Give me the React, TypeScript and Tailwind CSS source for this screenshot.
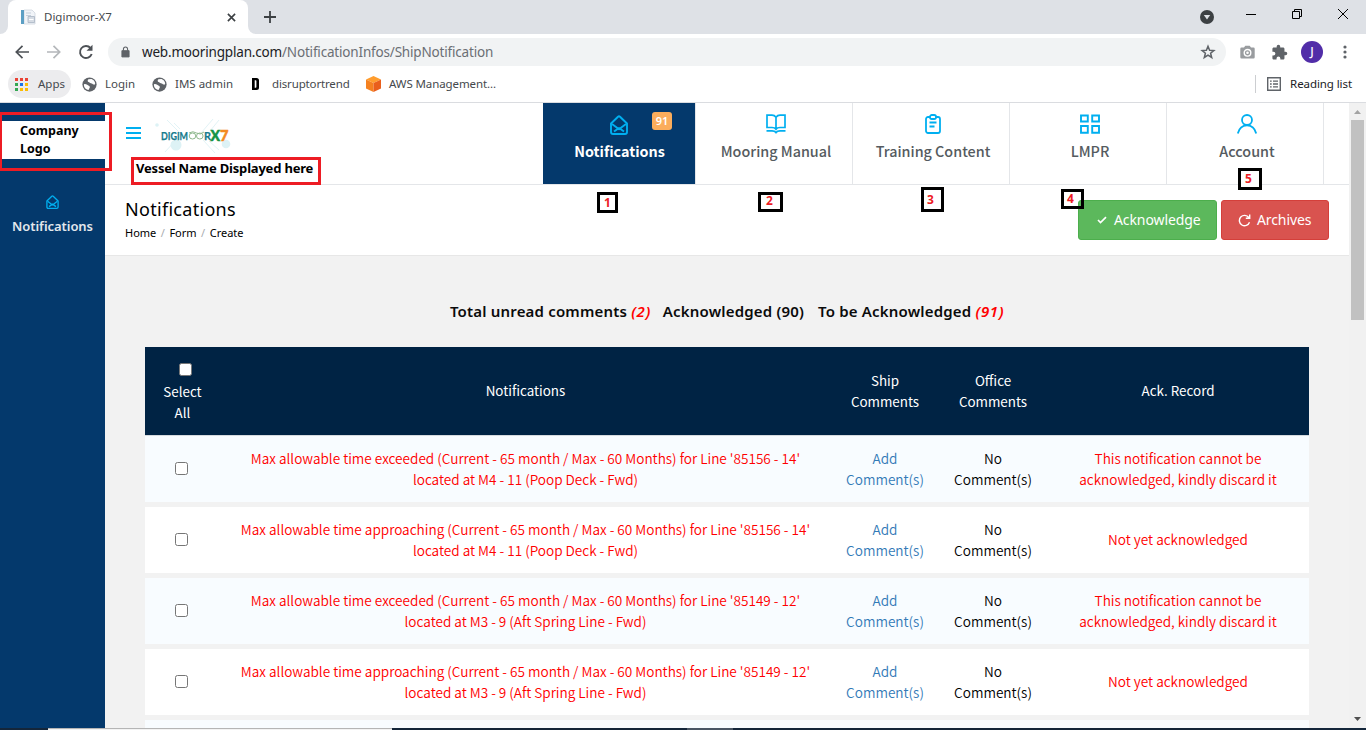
import React from 'react';

const UI = "font-['Noto_Sans','Open_Sans',sans-serif]";
const SOURCE = "font-['Noto_Sans_CJK_SC','Noto_Sans',sans-serif]";

function Globe() {
  return (
    <svg viewBox="0 0 16 16" className="size-[15px] shrink-0">
      <circle cx="8" cy="8" r="7.6" fill="#5f6368" />
      <path d="M2 8.600c0-1 .9-1.200 2-.9 1.600.4 2.500 1.300 3.400 1.700.9.500 1.300 1.300.7 2.200-.6.800-.6 1.800-1.500 2.300C3.800 13.300 2.100 11.400 2 8.600ZM6.800 2.400l3.400-.3c2 .8 3.400 2.300 3.800 4.300.2 1.300-.5 2-1.600 1.700-1.200-.3-1.500-1.400-2.900-1.400-1.300 0-1.300-1.100-2.400-1.300-1.100-.3-1.500-1.800-.3-3Z" fill="#fff" />
    </svg>
  );
}

const appDots = ['#ea4335', '#ea4335', '#ea4335', '#34a853', '#1a73e8', '#fbbc04', '#34a853', '#fbbc04', '#fbbc04'];

function TabStrip() {
  return (
    <div className="flex h-[34px] bg-[#dee1e6]">
      <div className="flex w-2 items-end bg-white">
        <div className="h-full w-2 rounded-br-lg bg-[#dee1e6]" />
      </div>
      <div className="flex h-full w-60 items-center rounded-t-lg bg-white pl-3">
        <svg viewBox="0 0 16 16" className="size-4">
          <path d="M4 1h8l3 3v11H4z" fill="#f1f4f8" stroke="#cfd6de" strokeWidth=".8" />
          <path d="M1 1h3v14H1z" fill="#5c9fc4" />
          <path d="M6 4h5M6 6.500h5" stroke="#c5ceda" />
          <path d="M8 7.500h6.500v6H8z" fill="#d5dbe3" stroke="#a9b5c3" strokeWidth=".8" /><path d="M9 10.500h4.500" stroke="#fff" />
        </svg>
        <span className="ml-2 w-[183px] text-[11.5px] text-[#45494d]">Digimoor-X7</span>
        <svg viewBox="0 0 10 10" className="size-[9px] shrink-0"><path d="m1 1 8 8M9 1 1 9" stroke="#3c4043" strokeWidth="1.800" /></svg>
      </div>
      <div className="flex w-2 bg-white"><div className="h-full w-2 rounded-bl-lg bg-[#dee1e6]" /></div>
      <svg viewBox="0 0 14 14" className="ml-[7px] mt-[10px] size-[14px]"><path d="M7 1v12M1 7h12" stroke="#3c4043" strokeWidth="1.800" /></svg>
      <div className="ml-auto flex items-start">
        <svg viewBox="0 0 14 14" className="mt-[10px] mr-8 size-[14px]"><circle cx="7" cy="7" r="7" fill="#3c4043" /><path d="M3.800 5h6.400L7 9.600Z" fill="#dee1e6" /></svg>
        <svg viewBox="0 0 10 10" className="mt-[9px] mr-9 size-[10px]"><path d="M0 5.500h10" stroke="#000" /></svg>
        <svg viewBox="0 0 10 10" className="mt-[9px] mr-9 size-[10px]"><path d="M.5 2.500h7v7h-7zM2.500 2.500v-2h7v7h-2" fill="none" stroke="#000" /></svg>
        <svg viewBox="0 0 10 10" className="mt-[9px] mr-[18px] size-[10px]"><path d="m0 0 10 10M10 0 0 10" stroke="#000" /></svg>
      </div>
    </div>
  );
}

function Toolbar() {
  return (
    <div className="flex h-9 items-center bg-white pl-[15px] text-[#5f6368]">
      <svg viewBox="0 0 14 14" className="size-[14px]"><path d="M14 7H1.500M7.500.8 1.300 7l6.200 6.200" fill="none" stroke="#4d5156" strokeWidth="1.700" /></svg>
      <svg viewBox="0 0 14 14" className="ml-[18px] size-[14px]"><path d="M0 7h12.500M6.500.8 12.700 7l-6.200 6.200" fill="none" stroke="#b4b7ba" strokeWidth="1.700" /></svg>
      <svg viewBox="0 0 16 16" className="ml-[17px] size-4"><path d="M13.700 10A6 6 0 1 1 12.500 4" fill="none" stroke="#4d5156" strokeWidth="1.900" /><path d="M14.500.8v6H8.500Z" fill="#4d5156" /></svg>
      <div className="ml-[14px] flex h-7 w-[1118px] items-center rounded-full bg-[#f1f3f4] pr-[10px] pl-[13px]">
        <svg viewBox="0 0 10 13" className="h-3 w-[9px]"><path d="M1 5h8v7H1z" fill="#5f6368" stroke="#5f6368" strokeLinejoin="round" /><path d="M2.700 5V3.200a2.300 2.300 0 0 1 4.600 0V5" fill="none" stroke="#5f6368" strokeWidth="1.200" /></svg>
        <span className="ml-3 text-[13.5px] tracking-[-0.18px] text-[#6b6f74]"><span className="text-[#202124]">web.mooringplan.com</span>/NotificationInfos/ShipNotification</span>
        <svg viewBox="0 0 16 16" className="ml-auto size-4"><path d="m8 2.200 1.600 4 4.300.3-3.300 2.800 1.100 4.200L8 11.200l-3.700 2.300 1.100-4.200-3.300-2.800 4.300-.3Z" fill="none" stroke="#5f6368" strokeWidth="1.500" /></svg>
      </div>
      <svg viewBox="0 0 15 14" className="ml-[14px] h-[14px] w-[15px]"><path d="M1.500 2.500H4L5.300.8h4.400L11 2.500h2.500q1.200 0 1.200 1.200v8.500q0 1.200-1.200 1.200h-12Q.3 13.400.3 12.200V3.700q0-1.200 1.200-1.200Z" fill="#999c9f" /><circle cx="7.500" cy="7.800" r="3.300" fill="#999c9f" stroke="#fff" strokeWidth="1.400" /><circle cx="7.500" cy="7.800" r="1.300" fill="#fff" /></svg>
      <svg viewBox="0 0 24 24" className="ml-4 size-[17px]" fill="#5f6368"><path d="M20.500 11H19V7c0-1.100-.9-2-2-2h-4V3.500a2.500 2.500 0 0 0-5 0V5H4c-1.100 0-2 .9-2 2v3.800h1.500a2.700 2.700 0 0 1 0 5.400H2V20c0 1.100.9 2 2 2h3.800v-1.500a2.700 2.700 0 0 1 5.400 0V22H17c1.100 0 2-.9 2-2v-4h1.500a2.500 2.500 0 0 0 0-5Z" /></svg>
      <div className="ml-[13px] flex size-[22px] items-center justify-center rounded-full bg-[#512da8] text-xs font-medium text-white">J</div>
      <svg viewBox="0 0 4 14" className="ml-5 h-[14px] w-1" fill="#5f6368"><circle cx="2" cy="2" r="1.600" /><circle cx="2" cy="7" r="1.600" /><circle cx="2" cy="12" r="1.600" /></svg>
    </div>
  );
}

function Bookmarks() {
  return (
    <div className="flex h-[33px] items-center border-b border-[#dadce0] bg-white pb-1 text-[11.5px] text-[#45494d]">
      <div className="ml-2 flex h-7 w-[63px] shrink-0 items-center rounded-full bg-[#ececee] pl-[7px]">
        <div className="grid grid-cols-3 gap-[2px]">
          {appDots.map((c, i) => <span key={i} className="size-[3px]" style={{ backgroundColor: c }} />)}
        </div>
        <span className="ml-[10px]">Apps</span>
      </div>
      <div className="ml-[11px] flex w-[70px] items-center gap-2"><Globe />Login</div>
      <div className="flex w-[100px] items-center gap-2"><Globe />IMS admin</div>
      <div className="flex w-[114px] items-center">
        <svg viewBox="0 0 7 12" className="h-3 w-[7px]"><path d="M0 0h4.500Q7 0 7 2.500v7Q7 12 4.500 12H0ZM2.700 2.300v7.400h1.100q.6 0 .6-.6V2.900q0-.6-.6-.6Z" fill="#000" fillRule="evenodd" /></svg>
        <span className="ml-[13px] tracking-[-0.15px]">disruptortrend</span>
      </div>
      <svg viewBox="0 0 15 16" className="h-4 w-[15px]"><path d="M7.500 0 15 3.500 7.500 7 0 3.500Z" fill="#ff9d2e" /><path d="M0 3.500 7.500 7v9L0 12.500Z" fill="#f58120" /><path d="M15 3.500 7.500 7v9l7.500-3.500Z" fill="#e95f1c" /></svg>
      <span className="ml-2 tracking-[-0.1px]">AWS Management...</span>
      <div className="ml-auto mr-[14px] flex items-center border-l border-[#ccced1] pl-[11px]">
        <svg viewBox="0 0 14 14" className="size-[14px]"><path d="M.7.7h12.600v12.600H.7z" fill="none" stroke="#5f6368" strokeWidth="1.400" /><path d="M3 4.200h1.700M3 7h1.700M3 9.800h1.700M6 4.200h5M6 7h5M6 9.800h5" stroke="#5f6368" strokeWidth="1.300" /></svg>
        <span className="ml-[9px] tracking-[-0.08px] text-[#202124]">Reading list</span>
      </div>
    </div>
  );
}

function BrandLogo() {
  return (
    <svg viewBox="0 0 80 36" className="ml-3 h-9 w-20">
      <g stroke="#e2f3f6" fill="none"><path d="m14 3 14 14M21 6l6 6M60 2 48 16M66 3l-9 11M22 24 12 35M56 24l10 9M50 23l12 13" /></g>
      <g fill="#ddf2f5"><circle cx="4" cy="8" r="1.800" /><circle cx="23" cy="28" r="5.500" /><circle cx="73" cy="27" r="4.300" /></g>
      <g fontFamily="Lato, sans-serif" fontSize="11" fontWeight="700">
        <text x="8" y="22.500" fill="#167b8d" stroke="#167b8d" strokeWidth=".25" textLength="27" lengthAdjust="spacingAndGlyphs">DIGIM</text>
        <text x="51" y="22.500" fill="#167b8d" stroke="#167b8d" strokeWidth=".25" textLength="7" lengthAdjust="spacingAndGlyphs">R</text>
        <text x="57.500" y="23.500" fill="#159447" stroke="#159447" strokeWidth=".5" fontSize="15" fontWeight="900" textLength="9.500" lengthAdjust="spacingAndGlyphs">X</text>
        <text x="67" y="23.500" fill="#f38a22" stroke="#f38a22" strokeWidth=".5" fontSize="15" fontWeight="900" textLength="8.500" lengthAdjust="spacingAndGlyphs">7</text>
      </g>
      <g fill="none" stroke="#8fb98e" strokeWidth="1"><ellipse cx="39.500" cy="19" rx="3.300" ry="3" /><ellipse cx="46.800" cy="19" rx="3.300" ry="3" /><path d="M36 16q4-2.500 7.500 0t7.500-1" /></g>
    </svg>
  );
}

const ClipIcon = () => (
  <svg viewBox="0 0 16 20" className="h-5 w-4" fill="none" stroke="#00aff0" strokeWidth="1.800"><rect x="1" y="3" width="14" height="16" rx="2" /><rect x="5" y="1" width="6" height="4" rx="1.800" fill="#fff" /><path d="M4.500 8.500h7M4.500 12.500h5" /></svg>
);
const GridIcon = () => (
  <svg viewBox="0 0 20 20" className="size-5" fill="none" stroke="#00aff0" strokeWidth="1.900"><path d="M1 1.500h6.800v6H1zM12.200 1.500H19v6h-6.800zM1 12h6.800v6.800H1zM12.200 12H19v6.800h-6.800z" /></svg>
);
const UserIcon = () => (
  <svg viewBox="0 0 20 20" className="size-5" fill="none" stroke="#00aff0" strokeWidth="1.800"><circle cx="10" cy="6" r="5" /><path d="M.8 19.500C2 14.500 5.500 11.300 10 11.300s8 3.200 9.200 8.200" /></svg>
);
const EnvelopeIcon = ({ className }: { className: string }) => (
  <svg viewBox="0 0 18 20" className={className} fill="none" stroke="#00aff0" strokeWidth="1.900" strokeLinejoin="round"><path d="M1 8.500 8 1.700q1-.9 2 0l7 6.800V17q0 2-2 2H3q-2 0-2-2Z" /><path d="m2 9 7 5.300L16 9M4 16.600l5-3.600 5 3.600" /></svg>
);
const BookIcon = () => (
  <svg viewBox="0 0 20 20" className="size-5" fill="none" stroke="#00aff0" strokeWidth="1.700"><path d="M10 3.200Q8.500 1.200 6 1.200H1v12.300h5q2.800 0 4 1.800 1.200-1.800 4-1.800h5V1.200h-5q-2.500 0-4 2v12M.5 16.800H6q2.700 0 4 1.800 1.300-1.800 4-1.800h5.500" /></svg>
);

function Header() {
  const items = [
    { label: 'Mooring Manual', icon: <BookIcon /> },
    { label: 'Training Content', icon: <ClipIcon /> },
    { label: 'LMPR', icon: <GridIcon /> },
    { label: 'Account', icon: <UserIcon /> },
  ];
  return (
    <header className="flex h-[82px] border-b border-[#e4e6e9] bg-white">
      <div className="flex w-[438px] items-start pt-[14px] pl-[21px]">
        <svg viewBox="0 0 15 12" className="mt-[10px] h-3 w-[15px]"><path d="M0 1h15M0 6h15M0 11h15" stroke="#00aff0" strokeWidth="2" /></svg>
        <BrandLogo />
      </div>
      <nav className={`flex text-[14.35px] font-medium text-[#555b60] ${SOURCE}`}>
        <div className="relative flex w-[153px] flex-col items-center border-r border-[#e4e6e9] bg-[#04396c] pt-3 font-bold text-white">
          <EnvelopeIcon className="h-5 w-[18px]" />
          <span className="mt-[5px] ml-px leading-[21px]">Notifications</span>
          <span className={`absolute top-[9px] left-[109px] flex h-[18px] w-5 items-center justify-center rounded-[3px] bg-[#fbad5c] text-[11px] font-semibold ${UI}`}>91</span>
        </div>
        {items.map((it) => (
          <div key={it.label} className="flex w-[157px] flex-col items-center border-r border-[#e4e6e9] pt-[11px] pl-1">
            {it.icon}
            <span className="mt-[6px] leading-[21px]">{it.label}</span>
          </div>
        ))}
      </nav>
    </header>
  );
}

function TitleBar() {
  return (
    <div className="flex h-[71px] items-start border-b border-[#e7e7e7] bg-white pt-[15px] pl-5">
      <div className="text-black">
        <h1 className="-mt-[3px] text-[18px] leading-6 tracking-[0.3px]">Notifications</h1>
        <div className="mt-1 flex text-[11px] leading-4">
          <span>Home</span><span className="mx-[4.5px] text-[#a9acb0]">/</span><span>Form</span><span className="mx-[4.5px] text-[#a9acb0]">/</span><span>Create</span>
        </div>
      </div>
      <div className="mr-5 ml-auto flex gap-1 text-[14px] text-white">
        <button className="flex h-10 w-[139px] items-center rounded-[3px] border border-[#4cae4c] bg-[#5cb85c] pb-[2px] pl-[18px] tracking-[-0.1px]">
          <svg viewBox="0 0 10 8" className="mt-[2px] mr-[7px] h-2 w-[10px]"><path d="m1 4 2.500 2.500L9 1.200" fill="none" stroke="#fff" strokeWidth="1.700" /></svg>
          Acknowledge
        </button>
        <button className="flex h-10 w-[108px] items-center rounded-[3px] border border-[#d43f3a] bg-[#d9534f] pb-[2px] pl-[16px] tracking-[-0.1px]">
          <svg viewBox="0 0 13 13" className="mt-[2px] mr-[6px] size-[13px]"><path d="M11.500 8.300A5.200 5.200 0 1 1 10.800 3.500M7.800 4.300h3.900V.5" fill="none" stroke="#fff" strokeWidth="1.400" /></svg>
          Archives
        </button>
      </div>
    </div>
  );
}

const COLS = 'grid grid-cols-[75px_611px_108px_108px_262px] items-center text-center';
const rows = [
  { text: "Max allowable time exceeded (Current - 65 month / Max - 60 Months) for Line '85156 - 14'", where: 'located at M4 - 11 (Poop Deck - Fwd)', discard: true },
  { text: "Max allowable time approaching (Current - 65 month / Max - 60 Months) for Line '85156 - 14'", where: 'located at M4 - 11 (Poop Deck - Fwd)', discard: false },
  { text: "Max allowable time exceeded (Current - 65 month / Max - 60 Months) for Line '85149 - 12'", where: 'located at M3 - 9 (Aft Spring Line - Fwd)', discard: true },
  { text: "Max allowable time approaching (Current - 65 month / Max - 60 Months) for Line '85149 - 12'", where: 'located at M3 - 9 (Aft Spring Line - Fwd)', discard: false },
];

function NotificationTable() {
  return (
    <div className={`mx-10 mt-6 w-[1164px] text-[13.6px] leading-[21px] ${SOURCE}`}>
      <div className={`${COLS} h-[89px] border-b border-[#d5dade] bg-[#002344] text-[13.4px] text-white`}>
        <div className="flex flex-col items-center pt-1">
          <span className="mb-[5px] ml-[6px] size-[13px] rounded-[2.5px] border border-[#767676] bg-white" />
          <span>Select<br />All</span>
        </div>
        <div className="pb-[2px]">Notifications</div>
        <div>Ship<br />Comments</div>
        <div>Office<br />Comments</div>
        <div className="pb-[2px]">Ack. Record</div>
      </div>
      {rows.map((r, i) => (
        <div key={r.text} className={`${COLS} mb-[5px] h-[66px] text-[#ff0000] ${i % 2 ? 'bg-white' : 'bg-[#f8fcff]'} font-[350]`}>
          <div className="flex justify-center pb-[2px]"><span className="mr-[2px] size-[13px] rounded-[2.5px] border border-[#767676] bg-white" /></div>
          <div className="whitespace-nowrap">{r.text}<br />{r.where}</div>
          <div className="text-[#337ab7]">Add<br />Comment(s)</div>
          <div className="text-black">No<br />Comment(s)</div>
          {r.discard
            ? <div>This notification cannot be<br />acknowledged, kindly discard it</div>
            : <div className="pb-[2px]">Not yet acknowledged</div>}
        </div>
      ))}
      <div className="h-5 bg-[#f8fcff]" />
    </div>
  );
}

function Annotations() {
  const num = 'absolute flex items-center justify-center border-[3px] border-black text-[12px] leading-none font-bold text-[#ed1c24]';
  return (
    <div className="text-[13px] font-bold text-black">
      <div className="absolute top-[112px] -left-px h-[59px] w-[113px] border-[3px] border-[#ed1c24]" />
      <div className="absolute top-[122px] left-5 text-[12.5px] leading-[18px]">Company<br />Logo</div>
      <div className="absolute top-[157px] left-[131px] h-7 w-[190px] border-[3px] border-[#ed1c24] bg-white pl-[2px] leading-4 tracking-[-0.2px] whitespace-nowrap">Vessel Name Displayed here</div>
      <div className={`${num} top-[192px] left-[597px] h-[21px] w-[21px] bg-white`}>1</div>
      <div className={`${num} top-[192px] left-[758px] h-5 w-[25px] bg-white pr-[2px] pb-[2px]`}>2</div>
      <div className={`${num} top-[187px] left-[921px] h-[25px] w-[23px] bg-white pr-1`}>3</div>
      <div className={`${num} top-[189px] left-[1061px] h-5 w-[23px] pr-1`}>4</div>
      <div className={`${num} top-[168px] left-[1238px] h-[22px] w-6 bg-white pr-[3px]`}>5</div>
    </div>
  );
}

export default function App() {
  return (
    <div className={`relative flex h-[730px] w-[1366px] flex-col overflow-hidden bg-white ${UI}`}>
      <TabStrip />
      <Toolbar />
      <Bookmarks />
      <div className="flex h-[625px] overflow-hidden">
        <aside className="w-[105px] shrink-0 bg-[#04396c] pt-[18px]">
          <div className="h-[38px] bg-white" />
          <div className="mt-9 flex flex-col items-center">
            <EnvelopeIcon className="h-[14px] w-[13px]" />
            <span className="mt-2 text-[13px] leading-[18px] font-semibold tracking-[-0.05px] text-[#e3e8ed]">Notifications</span>
          </div>
        </aside>
        <main className="w-[1244px] shrink-0 bg-[#f2f2f2]">
          <Header />
          <TitleBar />
          <div className="mt-[43px] flex justify-center text-[15px] leading-6 font-semibold tracking-[0.18px] whitespace-pre text-[#0b0b0b]">
            <span>Total unread comments <i className="tracking-[0.6px] text-[#ff0000]">(2)</i></span>
            <span className="ml-3">Acknowledged (90)</span>
            <span className="ml-[14px]">To be Acknowledged <i className="tracking-[0.6px] text-[#ff0000]">(91)</i></span>
          </div>
          <NotificationTable />
        </main>
        <div className="flex w-[17px] flex-col items-center bg-[#f1f1f1]">
          <svg viewBox="0 0 7 4" className="mt-[7px] h-1 w-[7px]"><path d="M0 4 3.500 0 7 4Z" fill="#a3a3a3" /></svg>
          <div className="mt-[6px] h-[200px] w-[13px] bg-[#c1c1c1]" />
          <svg viewBox="0 0 7 4" className="mt-auto mb-[7px] h-1 w-[7px]"><path d="m0 0 3.500 4L7 0Z" fill="#505050" /></svg>
        </div>
      </div>
      <div className="flex h-0.5 bg-[#14263a]">
        <div className="ml-12 w-[344px] border-t border-[#b5b5b5] bg-[#f3f3f3]" />
        <div className="ml-[295px] w-[46px] bg-[#4a5664]" />
      </div>
      <Annotations />
    </div>
  );
}
